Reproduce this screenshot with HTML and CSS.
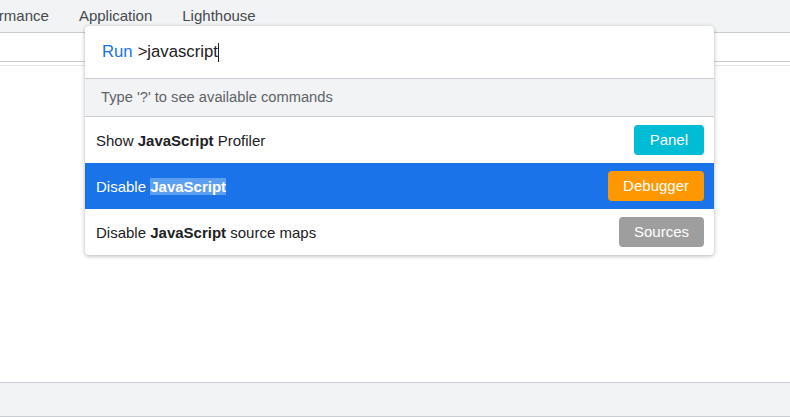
FILE: index.html
```html
<!DOCTYPE html>
<html>
<head>
    <title>Command Menu</title>
    <link rel="stylesheet" href="styles.css">
</head>
<body>
    <div class="devtools">
        <div class="tabbar">
            <div class="tabs">
                <span class="tab">Performance</span>
                <span class="tab">Application</span>
                <span class="tab">Lighthouse</span>
            </div>
        </div>

        <div class="toolbar"></div>

        <div class="content"></div>

        <div class="drawer"></div>

        <div class="palette">
            <div class="prompt">
                <span class="prompt-label">Run</span>
                <span class="prompt-text">&gt;javascript</span><span class="caret"></span>
            </div>
            <div class="hint">Type '?' to see available commands</div>
            <div class="item">
                <span class="item-title">Show <b>JavaScript</b> Profiler</span>
                <span class="badge panel">Panel</span>
            </div>
            <div class="item selected">
                <span class="item-title">Disable <b class="match">JavaScript</b></span>
                <span class="badge debugger">Debugger</span>
            </div>
            <div class="item">
                <span class="item-title">Disable <b>JavaScript</b> source maps</span>
                <span class="badge sources">Sources</span>
            </div>
        </div>
    </div>
</body>
</html>
```

FILE: styles.css
```css
body {
    margin: 0;
    font-family: 'Liberation Sans', Arial, sans-serif;
    color: #202124;
    background-color: #fff;
}

.devtools {
    position: relative;
    height: 417px;
    display: flex;
    flex-direction: column;
    overflow: hidden;
}

.tabbar {
    height: 32px;
    background-color: #f1f3f4;
    border-bottom: 1px solid #cacdd1;
    overflow: hidden;
}

.tabs {
    display: flex;
    margin-left: -52px;
}

.tab {
    padding: 0 15px;
    line-height: 32px;
    font-size: 15px;
    color: #474a4e;
}

.toolbar {
    height: 28px;
    border-bottom: 1px solid #cacdd1;
}

.content {
    flex: 1;
    border-top: 1px solid #e6e7e9;
    margin-top: 3px;
}

.drawer {
    height: 33px;
    background-color: #f1f3f4;
    border-top: 1px solid #cacdd1;
    border-bottom: 1px solid #cacdd1;
}

.palette {
    position: absolute;
    top: 26px;
    left: 85px;
    width: 629px;
    background-color: #fff;
    border-radius: 4px;
    box-shadow: 0 1px 4px rgba(0, 0, 0, 0.3);
    overflow: hidden;
}

.prompt {
    height: 52px;
    display: flex;
    align-items: center;
    padding-left: 17px;
    font-size: 16.7px;
    border-bottom: 1px solid #cacdd1;
}

.prompt-label {
    color: #1a73e8;
    margin-right: 5px;
}

.prompt-text {
    color: #202124;
}

.caret {
    display: inline-block;
    width: 1px;
    height: 19px;
    background-color: #202124;
}

.hint {
    height: 37px;
    line-height: 37px;
    padding-left: 16px;
    font-size: 14.7px;
    color: #5f6368;
    background-color: #f1f3f4;
    border-bottom: 1px solid #cacdd1;
}

.item {
    height: 46px;
    display: flex;
    align-items: center;
    justify-content: space-between;
    padding: 0 10px 0 11px;
    font-size: 15px;
}

.item b {
    font-weight: bold;
}

.item.selected {
    background-color: #1a73e8;
    color: #fff;
}

.match {
    background-color: #5c9ef0;
}

.badge {
    height: 30px;
    line-height: 30px;
    padding: 0 15px;
    border-radius: 4px;
    color: #fff;
    font-size: 15px;
}

.badge.panel {
    background-color: #00bcd4;
    padding: 0 16px;
}

.badge.debugger {
    background-color: #ff9800;
}

.badge.sources {
    background-color: #9e9e9e;
}
```
